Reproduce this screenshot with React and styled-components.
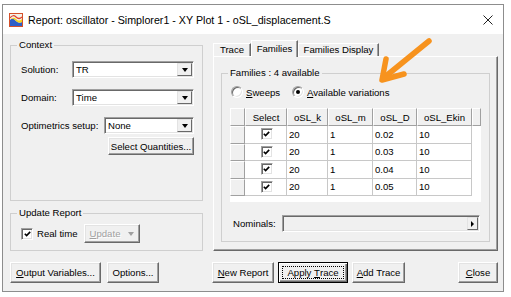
import React from "react";
import styled, { createGlobalStyle, css } from "styled-components";

const GlobalStyle = createGlobalStyle`
  html, body { margin: 0; padding: 0; background: #fff; }
  body {
    font-family: "Liberation Sans", Arial, sans-serif;
    font-size: 9.6px;
    color: #000;
  }
  * { box-sizing: border-box; }
`;

const Page = styled.div`
  position: relative;
  width: 511px;
  height: 297px;
  padding: 4px 0 0 2px;
  overflow: hidden;
`;

const Window = styled.div`
  width: 502px;
  height: 288px;
  border: 1px solid #8d8d8d;
  background: #f0f0f0;
  display: flex;
  flex-direction: column;
`;

const TitleBar = styled.div`
  flex: none;
  height: 29px;
  background: #fff;
  display: flex;
  align-items: center;
  gap: 5px;
  padding: 0 10px 0 6px;
`;

const Title = styled.span`
  flex: 1;
  font-size: 10.7px;
  color: #000;
  white-space: nowrap;
`;

const Body = styled.div`
  flex: 1;
  display: flex;
  flex-direction: column;
  padding: 5px 4px 0 7px;
`;

const Main = styled.div`
  display: flex;
  gap: 10px;
  height: 212px;
`;

const LeftColumn = styled.div`
  width: 193px;
  flex: none;
  display: flex;
  flex-direction: column;
  gap: 6px;
`;

const RightColumn = styled.div`
  width: 285px;
  flex: none;
  margin-top: 1px;
  display: flex;
  flex-direction: column;
`;

const Group = styled.fieldset`
  margin: 0;
  padding: 0;
  min-width: 0;
  height: ${(p) => p.$h}px;
  border: 1px solid #cfcfcf;
`;

const Legend = styled.legend`
  margin-left: 6px;
  padding: 0 2px;
  line-height: 12px;
`;

const GroupContent = styled.div`
  padding: ${(p) => p.$pad};
`;

const FieldRow = styled.div`
  display: flex;
  align-items: center;
  height: 17px;
  margin-bottom: ${(p) => p.$after}px;
`;

const FieldLabel = styled.span`
  flex: none;
  width: ${(p) => p.$w}px;
  white-space: nowrap;
`;

const Combo = styled.div`
  flex: 1;
  height: 17px;
  display: flex;
  background: #fff;
  border: 1px solid;
  border-color: #a0a0a0 #fff #fff #a0a0a0;
  box-shadow: inset 1px 1px 0 #696969, inset -1px -1px 0 #e3e3e3;
  padding: 1px;
`;

const ComboText = styled.span`
  flex: 1;
  padding-left: 2px;
  line-height: 13px;
`;

const ArrowButton = styled.span`
  flex: none;
  width: ${(p) => p.$w || 15}px;
  background: #f0f0f0;
  border: 1px solid;
  border-color: #e3e3e3 #696969 #696969 #e3e3e3;
  display: flex;
  align-items: center;
  justify-content: center;
`;

const Caret = styled.span`
  width: 0;
  height: 0;
  ${(p) =>
    p.$dir === "right"
      ? css`
          border-top: 3px solid transparent;
          border-bottom: 3px solid transparent;
          border-left: 3px solid #000;
        `
      : css`
          border-left: 3.5px solid transparent;
          border-right: 3.5px solid transparent;
          border-top: 4px solid ${p.$disabled ? "#a0a0a0" : "#000"};
        `}
`;

const ButtonRow = styled.div`
  display: flex;
  justify-content: flex-end;
`;

const Button = styled.button`
  font: inherit;
  color: #000;
  width: ${(p) => p.$w}px;
  height: ${(p) => p.$h || 21}px;
  margin-left: ${(p) => p.$ml || 0}px;
  padding: 0;
  background: #f0f0f0;
  border: 1px solid;
  border-color: #fff #696969 #696969 #fff;
  box-shadow: inset -1px -1px 0 #a0a0a0, inset 1px 1px 0 #e3e3e3;
  display: flex;
  align-items: center;
  justify-content: center;
  gap: 8px;
  white-space: nowrap;
  ${(p) =>
    p.$default &&
    css`
      border-color: #000;
      box-shadow: inset 1px 1px 0 #fff, inset -1px -1px 0 #696969,
        inset -2px -2px 0 #a0a0a0;
    `}
  ${(p) =>
    p.disabled &&
    css`
      color: #a0a0a0;
      text-shadow: 1px 1px 0 #fff;
    `}
`;

const Focus = styled.span`
  display: flex;
  align-items: center;
  justify-content: center;
  width: calc(100% - 6px);
  height: calc(100% - 6px);
  border: 1px dotted #000;
`;

const U = styled.span`
  text-decoration: underline;
`;

const CheckRow = styled.div`
  display: flex;
  align-items: center;
`;

const CheckLabel = styled.label`
  width: ${(p) => p.$w}px;
  display: flex;
  align-items: center;
  gap: 4px;
`;

const Box = styled.span`
  flex: none;
  width: ${(p) => p.$size}px;
  height: ${(p) => p.$size}px;
  background: #fff;
  border: 1px solid;
  border-color: #a0a0a0 #fff #fff #a0a0a0;
  box-shadow: inset 1px 1px 0 #696969, inset -1px -1px 0 #e3e3e3;
  display: flex;
  align-items: center;
  justify-content: center;
`;

const Check = ({ size = 12 }) => (
  <Box $size={size}>
    <svg width="7" height="6" viewBox="0 0 7 6">
      <path d="M0.8 2.8 L2.6 4.6 L6.2 0.9" fill="none" stroke="#000" strokeWidth="1.6" />
    </svg>
  </Box>
);

const TabStrip = styled.div`
  display: flex;
  align-items: flex-end;
  height: 16px;
  flex: none;
`;

const Tab = styled.div`
  position: relative;
  width: ${(p) => p.$w}px;
  height: ${(p) => (p.$active ? 17 : 13)}px;
  margin-bottom: ${(p) => (p.$active ? -1 : 0)}px;
  padding: ${(p) => (p.$active ? "2px 0 0" : "0")};
  background: #f0f0f0;
  border: 1px solid;
  border-bottom: none;
  border-color: #fff #696969 transparent #fff;
  box-shadow: inset -1px 0 0 #a0a0a0;
  text-align: center;
  line-height: 12px;
  white-space: nowrap;
  z-index: ${(p) => (p.$active ? 1 : 0)};
`;

const TabPanel = styled.div`
  flex: 1;
  border: 1px solid;
  border-color: #fff #696969 #696969 #fff;
  box-shadow: inset -1px -1px 0 #a0a0a0;
  padding: 10px 7px 0 7px;
`;

const RadioRow = styled.div`
  display: flex;
  align-items: center;
  height: 12px;
  margin: 7px 0 0 1px;
`;

const RadioOption = styled.label`
  display: flex;
  align-items: center;
  gap: 3px;
  width: ${(p) => p.$w || "auto"}px;
`;

const RadioCircle = styled.span`
  flex: none;
  width: 12px;
  height: 12px;
  border-radius: 50%;
  background: #fff;
  border: 1px solid;
  border-color: #a0a0a0 #fff #fff #a0a0a0;
  box-shadow: inset 1px 1px 0 #696969, inset -1px -1px 0 #e3e3e3;
  display: flex;
  align-items: center;
  justify-content: center;
  &::after {
    content: "";
    width: 4px;
    height: 4px;
    border-radius: 50%;
    background: ${(p) => (p.$on ? "#000" : "transparent")};
  }
`;

const Grid = styled.div`
  margin-top: 10px;
  height: 94px;
  background: #fff;
  display: grid;
  grid-template-columns: 15px 42px 41px 45px 44px 55px 9px;
  grid-template-rows: 18px repeat(4, 17.5px);
  align-content: start;
`;

const Cell = styled.div`
  display: flex;
  align-items: center;
  overflow: hidden;
  white-space: nowrap;
  ${(p) =>
    p.$kind === "head"
      ? css`
          background: #f0f0f0;
          border: 1px solid;
          border-color: #fff #a0a0a0 #a0a0a0 #fff;
          justify-content: center;
        `
      : p.$kind === "blank"
      ? css`
          background: transparent;
        `
      : css`
          background: #fff;
          border-right: 1px solid #c8c8c8;
          border-bottom: 1px solid #c8c8c8;
          padding-left: 2px;
          justify-content: ${p.$center ? "center" : "flex-start"};
        `}
`;

const NominalRow = styled.div`
  display: flex;
  align-items: center;
  margin: 13px 1px 0 3px;
  height: 17px;
`;

const Slider = styled.div`
  flex: 1;
  height: 17px;
  display: flex;
  justify-content: flex-end;
  background: #f0f0f0;
  border: 1px solid;
  border-color: #a0a0a0 #fff #fff #a0a0a0;
  box-shadow: inset 1px 1px 0 #696969, inset -1px -1px 0 #e3e3e3;
  padding: 1px;
`;

const Footer = styled.div`
  display: flex;
  margin-top: 11px;
`;

const Arrow = styled.svg`
  position: absolute;
  left: 0;
  top: 0;
  pointer-events: none;
`;

const AppIcon = () => (
  <svg width="14" height="14" viewBox="0 0 14 14">
    <rect x="0.5" y="0.5" width="13" height="13" fill="#f4f1e8" stroke="#d4502a" />
    <path d="M1 13 L1 7 Q4 4 7 8 Q10 11 13 9 L13 13 Z" fill="#2c5fc9" />
    <path d="M1 7 Q4 3 7 6 Q10 9 13 6 L13 9 Q10 11 7 8 Q4 4 1 7 Z" fill="#f3d21b" />
    <path d="M1 5 Q4 1 7 4 Q10 7 13 4" fill="none" stroke="#e0432c" strokeWidth="1.2" />
  </svg>
);

const CloseGlyph = () => (
  <svg width="10" height="10" viewBox="0 0 10 10">
    <path d="M0.5 0.5 L9.5 9.5 M9.5 0.5 L0.5 9.5" stroke="#222" strokeWidth="1" />
  </svg>
);

const rows = [
  ["20", "1", "0.02", "10"],
  ["20", "1", "0.03", "10"],
  ["20", "1", "0.04", "10"],
  ["20", "1", "0.05", "10"],
];

const headers = ["Select", "oSL_k", "oSL_m", "oSL_D", "oSL_Ekin"];

export default function App() {
  return (
    <Page>
      <GlobalStyle />
      <Window>
        <TitleBar>
          <AppIcon />
          <Title>Report: oscillator - Simplorer1 - XY Plot 1 - oSL_displacement.S</Title>
          <CloseGlyph />
        </TitleBar>
        <Body>
          <Main>
            <LeftColumn>
              <Group $h={162}>
                <Legend>Context</Legend>
                <GroupContent $pad="10px 8px 0 10px">
                  <FieldRow $after={11}>
                    <FieldLabel $w={51}>Solution:</FieldLabel>
                    <Combo>
                      <ComboText>TR</ComboText>
                      <ArrowButton>
                        <Caret />
                      </ArrowButton>
                    </Combo>
                  </FieldRow>
                  <FieldRow $after={11}>
                    <FieldLabel $w={51}>Domain:</FieldLabel>
                    <Combo>
                      <ComboText>Time</ComboText>
                      <ArrowButton>
                        <Caret />
                      </ArrowButton>
                    </Combo>
                  </FieldRow>
                  <FieldRow $after={3}>
                    <FieldLabel $w={83}>Optimetrics setup:</FieldLabel>
                    <Combo>
                      <ComboText>None</ComboText>
                      <ArrowButton>
                        <Caret />
                      </ArrowButton>
                    </Combo>
                  </FieldRow>
                  <ButtonRow>
                    <Button $w={86} $h={18}>
                      Select Quantities...
                    </Button>
                  </ButtonRow>
                </GroupContent>
              </Group>
              <Group $h={44}>
                <Legend>Update Report</Legend>
                <GroupContent $pad="5px 8px 0 10px">
                  <CheckRow>
                    <CheckLabel $w={63}>
                      <Check size={12} />
                      Real time
                    </CheckLabel>
                    <Button $w={56} $h={19} disabled>
                      <span>
                        <U>U</U>pdate
                      </span>
                      <Caret $disabled />
                    </Button>
                  </CheckRow>
                </GroupContent>
              </Group>
            </LeftColumn>

            <RightColumn>
              <TabStrip>
                <Tab $w={38}>Trace</Tab>
                <Tab $w={47} $active>
                  Families
                </Tab>
                <Tab $w={81}>Families Display</Tab>
              </TabStrip>
              <TabPanel>
                <Group $h={175}>
                  <Legend>Families : 4 available</Legend>
                  <GroupContent $pad="0 8px 0 8px">
                    <RadioRow>
                      <RadioOption $w={61}>
                        <RadioCircle />
                        <span>
                          <U>S</U>weeps
                        </span>
                      </RadioOption>
                      <RadioOption>
                        <RadioCircle $on />
                        <span>
                          <U>A</U>vailable variations
                        </span>
                      </RadioOption>
                    </RadioRow>
                    <Grid>
                      <Cell $kind="head" />
                      {headers.map((h) => (
                        <Cell key={h} $kind="head">
                          {h}
                        </Cell>
                      ))}
                      <Cell $kind="head" />
                      {rows.map((r, i) => (
                        <React.Fragment key={i}>
                          <Cell $kind="head" />
                          <Cell $center>
                            <Check size={12} />
                          </Cell>
                          {r.map((v, j) => (
                            <Cell key={j}>{v}</Cell>
                          ))}
                          <Cell $kind="blank" />
                        </React.Fragment>
                      ))}
                    </Grid>
                    <NominalRow>
                      <FieldLabel $w={49}>Nominals:</FieldLabel>
                      <Slider>
                        <ArrowButton $w={11}>
                          <Caret $dir="right" />
                        </ArrowButton>
                      </Slider>
                    </NominalRow>
                  </GroupContent>
                </Group>
              </TabPanel>
            </RightColumn>
          </Main>

          <Footer>
            <Button $w={91}>
              <span>
                <U>O</U>utput Variables...
              </span>
            </Button>
            <Button $w={52} $ml={6}>
              Options...
            </Button>
            <Button $w={62} $ml={53}>
              <span>
                <U>N</U>ew Report
              </span>
            </Button>
            <Button $w={70} $ml={4} $default>
              <Focus>
                Apply&nbsp;<U>T</U>race
              </Focus>
            </Button>
            <Button $w={53} $ml={4}>
              <span>
                <U>A</U>dd Trace
              </span>
            </Button>
            <Button $w={40} style={{ marginLeft: "auto", marginRight: 1 }}>
              <span>
                <U>C</U>lose
              </span>
            </Button>
          </Footer>
        </Body>
      </Window>

      <Arrow width="511" height="297" viewBox="0 0 511 297">
        <g fill="none" stroke="#f7931e" strokeWidth="5.5" strokeLinecap="round" strokeLinejoin="round">
          <path d="M429 41 L386 76" />
          <path d="M386 59 L382 80 L404 74" />
        </g>
      </Arrow>
    </Page>
  );
}
